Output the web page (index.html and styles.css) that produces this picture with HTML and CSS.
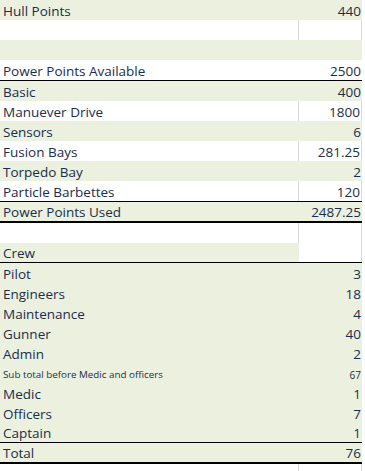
FILE: index.html
```html
<!DOCTYPE html>
<html>
<head>
<meta charset="utf-8">
<link rel="stylesheet" href="styles.css">
</head>
<body>
<div class="sheet">
  <div class="row g"><span class="lab">Hull Points</span><span class="val">440</span></div>
  <div class="row w"><span class="lab"></span><span class="val"></span></div>
  <div class="row g"><span class="lab"></span><span class="val"></span></div>
  <div class="row w fill b1"><span class="lab">Power Points Available</span><span class="val">2500</span></div>
  <div class="row g"><span class="lab">Basic</span><span class="val">400</span></div>
  <div class="row w"><span class="lab">Manuever Drive</span><span class="val">1800</span></div>
  <div class="row g"><span class="lab">Sensors</span><span class="val">6</span></div>
  <div class="row w"><span class="lab">Fusion Bays</span><span class="val">281.25</span></div>
  <div class="row g"><span class="lab">Torpedo Bay</span><span class="val">2</span></div>
  <div class="row w b1"><span class="lab">Particle Barbettes</span><span class="val">120</span></div>
  <div class="row g b2"><span class="lab">Power Points Used</span><span class="val">2487.25</span></div>
  <div class="row w"><span class="lab"></span><span class="val"></span></div>
  <div class="row crew b1"><span class="lab">Crew</span><span class="val"></span></div>
  <div class="row g"><span class="lab">Pilot</span><span class="val">3</span></div>
  <div class="row g"><span class="lab">Engineers</span><span class="val">18</span></div>
  <div class="row g"><span class="lab">Maintenance</span><span class="val">4</span></div>
  <div class="row g"><span class="lab">Gunner</span><span class="val">40</span></div>
  <div class="row g"><span class="lab">Admin</span><span class="val">2</span></div>
  <div class="row g small"><span class="lab">Sub total before Medic and officers</span><span class="val">67</span></div>
  <div class="row g"><span class="lab">Medic</span><span class="val">1</span></div>
  <div class="row g"><span class="lab">Officers</span><span class="val">7</span></div>
  <div class="row g b1 short"><span class="lab">Captain</span><span class="val">1</span></div>
  <div class="row g b2"><span class="lab">Total</span><span class="val">76</span></div>
  <div class="row w"><span class="lab"></span><span class="val"></span></div>
</div>
</body>
</html>
```
FILE: styles.css
```css
html, body {
  margin: 0;
  padding: 0;
  background: #ffffff;
}
body {
  font-family: "Open Sans", "Noto Sans", sans-serif;
  font-size: 13.5px;
  color: #1a2d4e;
}
.sheet {
  width: 362px;
  display: flex;
  flex-direction: column;
}
.row {
  display: grid;
  grid-template-columns: 299px 63px;
  height: 20px;
  box-sizing: border-box;
}
.row > span {
  display: block;
  white-space: nowrap;
  line-height: 20px;
  padding-top: 1px;
  box-sizing: border-box;
  overflow: hidden;
}
.lab { padding-left: 3px; }
.val { text-align: right; padding-right: 1px; }
.g { background: #ebf1de; }
.w { background: #ffffff; }
.w > span { border-right: 1px solid #d9d9d9; }
.w.fill > span { border-right: none; }
.crew .lab { background: #ebf1de; }
.crew .val { background: #ffffff; border-right: 1px solid #d9d9d9; }
.b1 { height: 21px; border-bottom: 1px solid #000000; }
.b1.short, .crew.b1 { height: 20px; }
.crew > span, .short > span { line-height: 19px; }
.b2 { height: 21px; border-bottom: 2px solid #000000; }
.b2 > span { line-height: 19px; }
.small .lab { font-size: 9.8px; padding-top: 2px; }
.small .val { font-size: 10px; padding-top: 2px; }
```
